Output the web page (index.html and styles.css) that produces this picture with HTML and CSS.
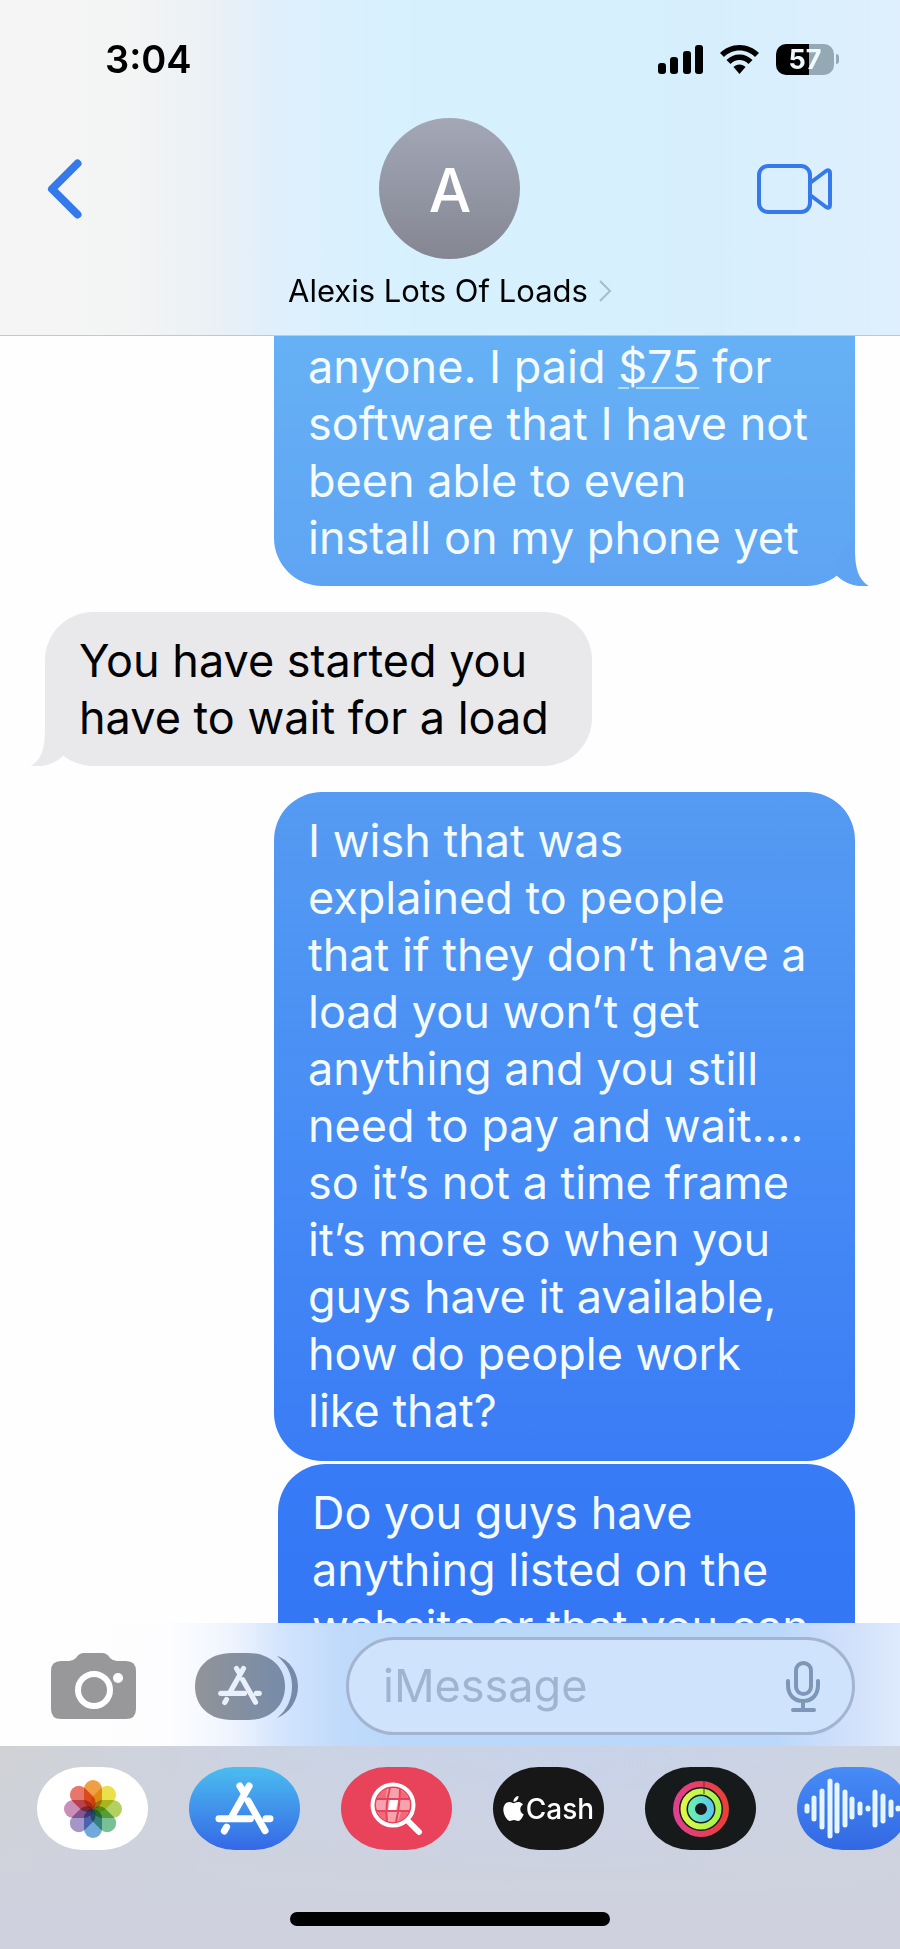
FILE: index.html
```html
<!DOCTYPE html>
<html lang="en">
<head>
<meta charset="utf-8">
<meta name="viewport" content="width=device-width, initial-scale=1">
<title>Messages</title>
<link rel="stylesheet" href="styles.css">
</head>
<body>
<svg class="sprite" aria-hidden="true">
  <symbol id="store" viewBox="640 535 190 172">
    <g fill="none" stroke="currentColor" stroke-width="21" stroke-linecap="round">
      <path d="M749 553L694 650M721 553L732 571M658 652H753M800 652H812M746 598L797 688M681 677L674 689"/>
    </g>
  </symbol>
</svg>
<div class="phone">
  <header class="header">
    <div class="status">
      <span class="time">3:04</span>
      <div class="indicators">
        <svg class="signal" viewBox="0 0 45 29" aria-label="Signal"><rect y="18" width="8" height="11" rx="3"/><rect x="12" y="12" width="8" height="17" rx="3"/><rect x="25" y="6" width="8" height="23" rx="3"/><rect x="37" width="8" height="29" rx="3"/></svg>
        <svg class="wifi" viewBox="0 0 39 29" aria-label="Wi-Fi"><path d="M19.500 0C12 0 5 3 0 8l4 4c4-4 9.500-6.500 15.500-6.500S31 8 35 12l4-4C34 3 27 0 19.500 0zM19.500 9.500c-5 0-9.500 2-13 5.500l4 4c2.500-2.500 5.500-4 9-4s6.500 1.500 9 4l4-4c-3.500-3.500-8-5.500-13-5.500zM19.500 19.500c-2.500 0-4.500 1-6 2.500l6 7 6-7c-1.500-1.500-3.500-2.500-6-2.500z"/></svg>
        <div class="battery"><span class="level">57</span><span class="nub"></span></div>
      </div>
    </div>
    <div class="nav">
      <button class="icon-button back" aria-label="Back"><svg width="35" height="60" viewBox="0 0 35 60"><path d="M30.500 4.500L5 30l25.500 25.500" fill="none" stroke="currentColor" stroke-width="8" stroke-linecap="round" stroke-linejoin="round"/></svg></button>
      <button class="contact">
        <span class="avatar">A</span>
        <span class="name">Alexis Lots Of Loads<svg width="13" height="22" viewBox="0 0 13 22"><path d="M1 1l10 10L1 21" fill="none" stroke="#a9bcc8" stroke-width="2"/></svg></span>
      </button>
      <button class="icon-button video" aria-label="Video call"><svg width="76" height="50" viewBox="0 0 76 50"><g fill="none" stroke="currentColor" stroke-width="4" stroke-linejoin="round"><rect x="2" y="2" width="51" height="46" rx="9"/><path d="M53 19L69 7Q73 5 73 9V41Q73 45 69 43L53 31"/></g></svg></button>
    </div>
  </header>

  <main class="chat">
    <div class="bubble sent cut">anyone. I paid <a class="amount" href="#">$75</a> for<br>software that I have not<br>been able to even<br>install on my phone yet<svg class="tail" viewBox="0 0 48 48"><path d="M34 0V10C34 30 37 41 48 48Q29 50 16 38V20Z"/></svg></div>
    <div class="bubble received">You have started you<br>have to wait for a load<svg class="tail" viewBox="0 0 48 48"><path d="M34 0V10C34 30 37 41 48 48Q29 50 16 38V20Z"/></svg></div>
    <div class="bubble sent long">I wish that was<br>explained to people<br>that if they don’t have a<br>load you won’t get<br>anything and you still<br>need to pay and wait....<br>so it’s not a time frame<br>it’s more so when you<br>guys have it available,<br>how do people work<br>like that?</div>
    <div class="bubble sent last">Do you guys have<br>anything listed on the<br>website or that you can</div>
  </main>

  <form class="composer">
    <button type="button" class="icon-button camera" aria-label="Camera"><svg width="85" height="66" viewBox="0 0 85 66"><path fill="#98989a" d="M10 8H18Q22 8 25 5Q28 0 33 0H51Q56 0 59 5Q62 8 66 8H75Q85 8 85 18V56Q85 66 75 66H10Q0 66 0 56V18Q0 8 10 8Z"/><circle cx="43" cy="37" r="16" fill="none" stroke="#fff" stroke-width="6"/><circle cx="67" cy="25" r="5" fill="#fff"/></svg></button>
    <button type="button" class="icon-button apps" aria-label="Apps"><svg width="103" height="67" viewBox="0 0 103 67"><defs><linearGradient id="slate"><stop offset="0" stop-color="#929498"/><stop offset="1" stop-color="#768ba9"/></linearGradient></defs><path fill="url(#slate)" d="M37 0H53C75 0 90 14 90 33.500S75 67 53 67H37C14 67 0 53 0 33.500S14 0 37 0Z"/><path fill="#768ba9" d="M82 3C95 7 103 20 103 33.500S95 60 82 65C92 57 97 46 97 33.500S92 11 82 3Z"/><use href="#store" x="21" y="11" width="48" height="43" color="#e8f0fb"/></svg></button>
    <div class="field">
      <input class="input" type="text" placeholder="iMessage" aria-label="iMessage">
      <button type="button" class="icon-button mic" aria-label="Dictate"><svg width="34" height="51" viewBox="0 0 34 51"><g fill="none" stroke="#7e96b7" stroke-width="4" stroke-linecap="round"><rect x="10" y="2" width="15" height="31" rx="7.500"/><path d="M2 20V24C2 34 8 40 17 40S32 34 32 24V20M17 40V48M7 49H28"/></g></svg></button>
    </div>
  </form>

  <footer class="drawer">
    <nav class="tray">
      <button class="app photos" aria-label="Photos"><svg width="60" height="60" viewBox="-30 -30 60 60"><g class="petals"><rect x="-9" y="-29" width="18" height="29" rx="9" fill="#f0a044"/><rect x="-9" y="-29" width="18" height="29" rx="9" fill="#ecdf4c" transform="rotate(45)"/><rect x="-9" y="-29" width="18" height="29" rx="9" fill="#b4d160" transform="rotate(90)"/><rect x="-9" y="-29" width="18" height="29" rx="9" fill="#78c095" transform="rotate(135)"/><rect x="-9" y="-29" width="18" height="29" rx="9" fill="#70a9da" transform="rotate(180)"/><rect x="-9" y="-29" width="18" height="29" rx="9" fill="#a596ca" transform="rotate(225)"/><rect x="-9" y="-29" width="18" height="29" rx="9" fill="#c98fb8" transform="rotate(270)"/><rect x="-9" y="-29" width="18" height="29" rx="9" fill="#e8766a" transform="rotate(315)"/></g></svg></button>
      <button class="app store" aria-label="App Store"><svg width="63" height="57"><use href="#store"/></svg></button>
      <button class="app search" aria-label="Image search"><svg width="54" height="54" viewBox="0 0 54 54"><path d="M38 39L49 50" stroke="#fff" stroke-width="6" stroke-linecap="round"/><circle cx="23" cy="23" r="17" fill="#f7a3ae"/><g fill="#f06a7c"><path d="M12 9L17 7L16 16H7ZM30 8Q36 11 38 16H31ZM7 30H16L18 39Q10 37 7 30ZM31 30H38Q36 37 28 39Z"/></g><path fill="#fff" d="M20 18H28L26 28H18Z"/><path d="M20 6Q15 23 17 40M30 6Q30 23 26 40M6 17H40M6 29H40" fill="none" stroke="#e8435a" stroke-width="2"/><circle cx="23" cy="23" r="20.500" fill="none" stroke="#fff" stroke-width="4"/></svg></button>
      <button class="app cash" aria-label="Apple Cash"><svg width="21" height="25" viewBox="2 0 20 24"><path fill="#fff" d="M12.152 6.896c-.948 0-2.415-1.078-3.960-1.040-2.040.027-3.910 1.183-4.961 3.014-2.117 3.675-.546 9.103 1.519 12.090 1.013 1.454 2.208 3.090 3.792 3.039 1.520-.065 2.090-.987 3.935-.987 1.831 0 2.350.987 3.960.948 1.637-.026 2.676-1.480 3.676-2.948 1.156-1.688 1.636-3.325 1.662-3.415-.039-.013-3.182-1.221-3.220-4.857-.026-3.040 2.480-4.494 2.597-4.559-1.429-2.090-3.623-2.324-4.390-2.376-2-.156-3.675 1.090-4.610 1.090zM15.530 3.830c.843-1.012 1.400-2.427 1.245-3.830-1.207.052-2.662.805-3.532 1.818-.780.896-1.454 2.338-1.273 3.714 1.338.104 2.715-.688 3.559-1.701"/></svg><span>Cash</span></button>
      <button class="app fitness" aria-label="Fitness"><svg width="58" height="58" viewBox="-29 -29 58 58"><defs><linearGradient id="move" x1="1" x2="0"><stop offset="0" stop-color="#ea3f36"/><stop offset="1" stop-color="#e0408f"/></linearGradient><linearGradient id="exercise" x1="1" x2="0"><stop offset="0" stop-color="#a3f34c"/><stop offset="1" stop-color="#dcf84a"/></linearGradient><linearGradient id="stand" x1="1" x2="0"><stop offset="0" stop-color="#5cc9ec"/><stop offset="1" stop-color="#6beeb4"/></linearGradient></defs><g fill="none" stroke-width="6"><circle r="25" stroke="url(#move)"/><circle r="17.500" stroke="url(#exercise)"/><circle r="9.500" stroke="url(#stand)" stroke-width="7"/></g><path d="M3 -28V-22M3 -20V-15" stroke="#702b26" stroke-width="1"/></svg></button>
      <button class="app audio" aria-label="Voice memos"><svg width="111" height="83" viewBox="0 0 111 83"><path d="M10 39V44M17 31V52M25 24V60M33 14V69M40 18V64M48 25V58M55 32V50M63 37V46M71 41V42M78 25V58M86 29V54M94 35V48M101 41V42" stroke="#e6f6ff" stroke-width="5" stroke-linecap="round"/></svg></button>
    </nav>
    <div class="home"></div>
  </footer>
</div>
</body>
</html>
```
FILE: styles.css
```css
* { box-sizing: border-box; }
body {
  margin: 0;
  font-family: Inter, "Liberation Sans", sans-serif;
  color: #000;
  background: #fefefe;
}
button {
  margin: 0;
  padding: 0;
  border: 0;
  background: none;
  font: inherit;
  color: inherit;
}
svg { display: block; }
.sprite { position: absolute; width: 0; height: 0; }
.phone {
  display: flex;
  flex-direction: column;
  height: 100vh;
  overflow: hidden;
}

.header {
  flex: none;
  background: linear-gradient(90deg, #f5f5f5 0%, #f3f4f4 15%, #ebf1f5 23%, #e2effb 29%, #dbf0fd 36%, #d6f1fd 46%, #d7effd 80%, #dfeffd 100%);
  border-bottom: 1px solid #bccad3;
}
.status {
  display: flex;
  align-items: center;
  justify-content: space-between;
  height: 118px;
  padding: 0 61px 0 105px;
}
.time { font-size: 38px; font-weight: 600; line-height: 44px; }
.indicators { display: flex; align-items: center; gap: 17px; }
.signal { width: 45px; height: 29px; }
.wifi { width: 39px; height: 29px; }
.battery { display: flex; align-items: center; gap: 2px; }
.level {
  width: 58px;
  border-radius: 10px;
  background: linear-gradient(90deg, #000 57%, #94a9b4 57%);
  color: #eefaff;
  font-size: 27px;
  font-weight: 700;
  line-height: 31px;
  text-align: center;
}
.nub { width: 3px; height: 10px; border-radius: 0 3px 3px 0; background: #94a9b4; }

.nav {
  display: grid;
  grid-template-columns: 1fr auto 1fr;
  padding: 0 67px 26px 47px;
}
.icon-button { display: flex; align-items: center; flex: none; }
.back, .video { height: 141px; color: #3579ea; }
.video { justify-self: end; }
.contact { display: flex; flex-direction: column; align-items: center; gap: 14px; margin-left: 20px; }
.avatar {
  width: 141px;
  height: 141px;
  border-radius: 50%;
  background: linear-gradient(#a3a7b6, #848692);
  color: #fff;
  font-size: 60px;
  font-weight: 500;
  line-height: 145px;
  text-align: center;
}
.name { display: flex; align-items: center; gap: 11px; font-size: 31px; line-height: 36px; white-space: nowrap; }

.chat {
  flex: 1;
  min-height: 0;
  display: flex;
  flex-direction: column;
  overflow: hidden;
  padding: 0 45px;
}
.bubble {
  position: relative;
  flex: none;
  padding: 20px 34px;
  border-radius: 48px;
  font-size: 45px;
  line-height: 57px;
  white-space: nowrap;
}
.sent { align-self: flex-end; width: 581px; color: #f3fbff; }
.cut {
  padding-top: 2px;
  border-radius: 0 0 48px 48px;
  background: linear-gradient(#66b1f5, #5ea4f3);
}
.received {
  align-self: flex-start;
  width: 547px;
  margin: 26px 0;
  background: #e9e8eb;
}
.long { padding-bottom: 22px; background: linear-gradient(#559bf2, #478df5 50%, #3a7cf5); }
.last { width: 577px; margin-top: 3px; background: linear-gradient(#377bf6, #3375f4); }
.tail { position: absolute; right: -14px; bottom: 0; width: 48px; height: 48px; fill: #5ea4f3; }
.received .tail { right: auto; left: -14px; fill: #e9e8eb; transform: scaleX(-1); }
.amount {
  color: inherit;
  text-decoration: underline;
  text-decoration-thickness: 2px;
  text-decoration-color: #b4dcfb;
  text-underline-offset: 4px;
}

.composer {
  flex: none;
  display: flex;
  align-items: center;
  padding: 14px 45px 11px 51px;
  background: linear-gradient(90deg, #fefefe 0%, #fdfdff 19%, #eef4fe 26%, #d4e5fd 31%, #c0dafb 38%, #b9d8fa 46%, #b9d8fa 86%, #d0e0fa 94%, #deeafd 100%);
}
.apps { margin: 0 48px 0 59px; }
.field {
  flex: 1;
  min-width: 0;
  display: flex;
  align-items: center;
  height: 98px;
  padding: 0 32px 0 34px;
  border: 3px solid #a2b4d0;
  border-radius: 49px;
  background: #d0e3fc;
}
.input {
  flex: 1;
  min-width: 0;
  padding: 0;
  border: 0;
  outline: 0;
  background: none;
  font: inherit;
  font-size: 45px;
  line-height: 56px;
}
.input::placeholder { color: #a0b3d0; opacity: 1; }

.drawer {
  flex: none;
  padding: 21px 0 23px;
  background: linear-gradient(#0000 0%, #cfd2de 75%), linear-gradient(90deg, #d1d2d5 0%, #cbd3e3 30%, #c8d3ea 65%, #cdd4e0 100%);
}
.tray { display: flex; gap: 41px; padding-left: 37px; overflow: hidden; }
.app {
  flex: none;
  display: flex;
  align-items: center;
  justify-content: center;
  width: 111px;
  height: 83px;
  border-radius: 46px / 42px;
  overflow: hidden;
}
.photos { background: #fff; }
.petals rect { mix-blend-mode: multiply; }
.store { background: linear-gradient(#4bbdf0, #3568e6); color: #fff; }
.search { background: #e8435a; }
.cash { gap: 2px; background: #171717; color: #fff; font-size: 28px; font-weight: 500; }
.fitness { background: #171a1a; }
.audio { background: linear-gradient(#478cf7, #3268e2); }
.home {
  width: 320px;
  height: 14px;
  margin: 62px auto 0;
  border-radius: 7px;
  background: #000;
}
```
